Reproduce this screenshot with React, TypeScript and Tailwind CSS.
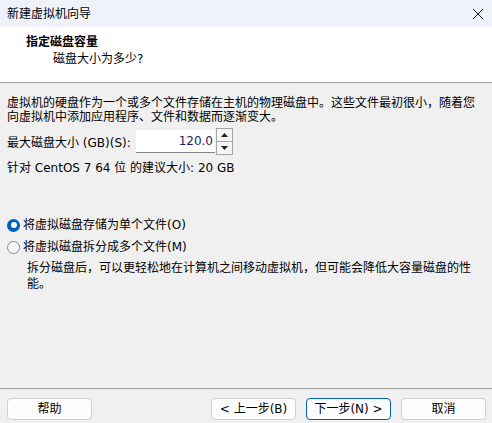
import React from "react";

const font = { fontFamily: '"DejaVu Sans", "Noto Sans CJK SC", sans-serif' };

const WinButton = ({ label, primary }: { label: string; primary?: boolean }) => (
  <button
    className={
      "w-[85px] h-[22px] rounded-[4px] bg-[#fdfdfd] text-[12px] leading-none text-black flex items-center justify-center border " +
      (primary ? "border-[#005fb8]" : "border-[#d0d0d0]")
    }
  >
    {label}
  </button>
);

const Radio = ({ checked, label }: { checked?: boolean; label: string }) => (
  <label className="flex items-center gap-[3px] h-[18px]">
    {checked ? (
      <span className="w-[13px] h-[13px] rounded-full bg-[#005fb8] flex items-center justify-center">
        <span className="w-[6px] h-[6px] rounded-full bg-white" />
      </span>
    ) : (
      <span className="w-[13px] h-[13px] rounded-full border border-[#8a8a8a] bg-[#f7f7f7]" />
    )}
    <span>{label}</span>
  </label>
);

export default function App() {
  return (
    <div
      className="w-[492px] h-[423px] flex flex-col bg-[#f0f0f0] text-[12px] text-black overflow-hidden"
      style={font}
    >
      {/* title bar */}
      <div className="h-[27px] flex items-center justify-between pl-[7px] pr-[6px] bg-[#eff3f9]">
        <span className="text-[12px] pt-[1px]">新建虚拟机向导</span>
        <svg width="12" height="12" viewBox="0 0 12 12" className="mr-[2px]">
          <path d="M1 1L11 11M11 1L1 11" stroke="#1a1a1a" strokeWidth="1" />
        </svg>
      </div>

      {/* header */}
      <div className="h-[56px] bg-white border-b border-[#a0a0a0] pt-[8px] pl-[26px]">
        <div className="font-bold leading-[15px]">指定磁盘容量</div>
        <div className="pl-[27px] mt-[2px] leading-[15px]">磁盘大小为多少?</div>
      </div>

      {/* body */}
      <div className="flex-1 px-[7px] pt-[13px]">
        <p className="leading-[14px]">
          虚拟机的硬盘作为一个或多个文件存储在主机的物理磁盘中。这些文件最初很小，随着您
          <br />
          向虚拟机中添加应用程序、文件和数据而逐渐变大。
        </p>

        <div className="flex items-center mt-[4px] h-[27px]">
          <span className="w-[129px] pt-[3px] whitespace-nowrap">最大磁盘大小 (GB)(S):</span>
          <div className="w-[79px] h-[23px] bg-white border-b border-[#868686] flex items-center justify-end pr-[2px] text-[#1c1c6b]">
            120.0
          </div>
          <div className="w-[17px] h-[27px] border border-[#a5a5a5] bg-[#f4f4f4] flex flex-col ml-[1px]">
            <div className="flex-1 flex items-center justify-center border-b border-[#a5a5a5]">
              <svg width="7" height="4" viewBox="0 0 7 4">
                <path d="M0 4L3.5 0L7 4Z" fill="#222" />
              </svg>
            </div>
            <div className="flex-1 flex items-center justify-center">
              <svg width="7" height="4" viewBox="0 0 7 4">
                <path d="M0 0L3.5 4L7 0Z" fill="#222" />
              </svg>
            </div>
          </div>
        </div>

        <p className="mt-[6px] leading-[15px]">针对 CentOS 7 64 位 的建议大小: 20 GB</p>

        <div className="mt-[40px] flex flex-col gap-[4px]">
          <Radio checked label="将虚拟磁盘存储为单个文件(O)" />
          <Radio label="将虚拟磁盘拆分成多个文件(M)" />
        </div>
        <p className="pl-[20px] mt-[4px] leading-[16px]">
          拆分磁盘后，可以更轻松地在计算机之间移动虚拟机，但可能会降低大容量磁盘的性
          <br />
          能。
        </p>
      </div>

      {/* footer */}
      <div className="h-[35px] border-t border-[#a0a0a0] pt-[9px] pl-[7px] pr-[6px] flex items-start justify-between">
        <WinButton label="帮助" />
        <div className="flex gap-[10px]">
          <WinButton label="< 上一步(B)" />
          <WinButton label="下一步(N) >" primary />
          <WinButton label="取消" />
        </div>
      </div>
    </div>
  );
}
